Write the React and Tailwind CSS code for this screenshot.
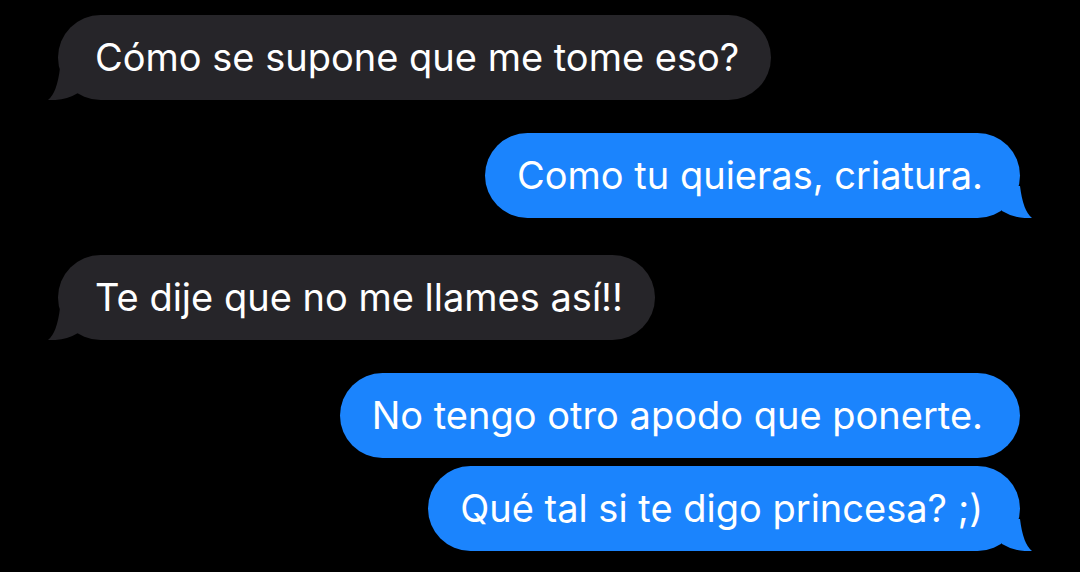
const messages = [
  { id: 1, me: false, text: 'Cómo se supone que me tome eso?', tail: true },
  { id: 2, me: true, text: 'Como tu quieras, criatura.', tail: true },
  { id: 3, me: false, text: 'Te dije que no me llames así!!', tail: true },
  { id: 4, me: true, text: 'No tengo otro apodo que ponerte.', tail: false },
  { id: 5, me: true, text: 'Qué tal si te digo princesa? ;)', tail: true },
];

function Tail({ me }) {
  // drawn relative to the bubble's bottom corner on the tail side
  return (
    <svg
      className={
        me
          ? 'absolute -right-[12px] bottom-0 w-[40px] h-[34px] text-[#1b84fd]'
          : 'absolute -left-[10px] bottom-0 w-[40px] h-[34px] text-[#262529] -scale-x-100'
      }
      viewBox="-28 -34 40 34"
      fill="currentColor"
    >
      <path d="M-18 -7 Q-5 1 12 0 Q3 -7 0 -32 L-18 -32 Z" />
    </svg>
  );
}

function Bubble({ msg }) {
  const cls = msg.me
    ? 'bg-[#1b84fd] pl-[32px] pr-[37px]'
    : 'bg-[#262529] pl-[37px] pr-[32px]';
  return (
    <div className={msg.me ? 'flex justify-end' : 'flex justify-start'}>
      <div className={`relative rounded-[44px] py-[20px] text-white text-[38px] leading-[45px] ${cls}`}>
        {msg.tail && <Tail me={msg.me} />}
        <span className="relative">{msg.text}</span>
      </div>
    </div>
  );
}

export default function App() {
  return (
    <div
      className="w-[1080px] h-[572px] bg-black overflow-hidden pl-[58px] pr-[60px] pt-[15px]"
      style={{ fontFamily: 'Inter, "Liberation Sans", sans-serif' }}
    >
      <div className="flex flex-col">
        <Bubble msg={messages[0]} />
        <div className="h-[33px]" />
        <Bubble msg={messages[1]} />
        <div className="h-[37px]" />
        <Bubble msg={messages[2]} />
        <div className="h-[33px]" />
        <Bubble msg={messages[3]} />
        <div className="h-[8px]" />
        <Bubble msg={messages[4]} />
      </div>
    </div>
  );
}
